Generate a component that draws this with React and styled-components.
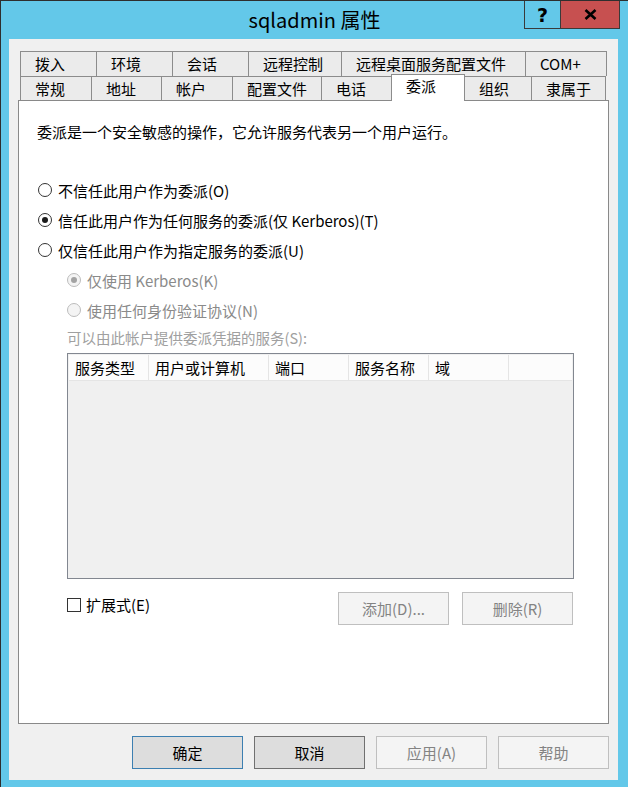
import React from "react";
import styled, { createGlobalStyle } from "styled-components";

const GlobalStyle = createGlobalStyle`
  html, body { margin: 0; padding: 0; background: #63c8e9; }
  body { font-family: "Noto Sans CJK SC", "Noto Sans", sans-serif; color: #000; }
  * { box-sizing: border-box; }
`;

const Window = styled.div`
  width: 628px;
  height: 787px;
  background: #63c8e9;
  border-top: 1px solid #2e2e2e;
  border-left: 1px solid #2e2e2e;
  display: flex;
  flex-direction: column;
  overflow: hidden;
`;

const TitleBar = styled.div`
  height: 38px;
  display: grid;
  grid-template-columns: 1fr auto 1fr;
  align-items: start;
`;

const Title = styled.div`
  font-size: 20px;
  line-height: 38px;
  white-space: nowrap;
`;

const Caption = styled.div`
  justify-self: end;
  display: flex;
  margin-right: 8px;
`;

const CaptionButton = styled.div`
  height: 28px;
  width: ${(p) => (p.$close ? "60px" : "36px")};
  background: ${(p) => (p.$close ? "#c75050" : "transparent")};
  border-left: 1px solid #3a3a3a;
  border-bottom: 1px solid #3a3a3a;
  border-right: ${(p) => (p.$close ? "1px solid #3a3a3a" : "none")};
  display: flex;
  align-items: center;
  justify-content: center;
  font-family: "DejaVu Sans", sans-serif;
  font-weight: bold;
  font-size: 19px;
  color: #000;
`;

const Client = styled.div`
  flex: 1;
  margin: 0 10px 7px 8px;
  background: #f0f0f0;
  padding: 12px 9px 0 9px;
  display: flex;
  flex-direction: column;
`;

const TabRow = styled.div`
  display: flex;
  align-items: flex-end;
  height: ${(p) => p.$h}px;
  padding-left: 2px;
`;

const Tab = styled.div`
  height: ${(p) => (p.$active ? 27 : p.$h)}px;
  flex: 0 0 auto;
  background: ${(p) => (p.$active ? "#fff" : "#ebebeb")};
  border-top: 1px solid #8c8c8c;
  border-left: 1px solid #8c8c8c;
  border-right: ${(p) => (p.$last || p.$active ? "1px solid #8c8c8c" : "none")};
  margin-right: ${(p) => (p.$active ? "-1px" : "0")};
  margin-bottom: ${(p) => (p.$active ? "-1px" : "0")};
  position: relative;
  z-index: ${(p) => (p.$active ? 2 : 1)};
  font-size: 15px;
  line-height: ${(p) => (p.$active ? 22 : p.$h - 1)}px;
  padding-left: 14px;
  white-space: nowrap;
`;

const Panel = styled.div`
  height: 624px;
  background: #fff;
  border: 1px solid #898989;
  padding: 21px 0 0 19px;
  display: flex;
  flex-direction: column;
`;

const Description = styled.div`
  font-size: 15px;
  line-height: 20px;
  margin-left: -1px;
  margin-bottom: 33px;
`;

const RadioRow = styled.div`
  height: 30px;
  display: flex;
  align-items: center;
  gap: 6px;
  padding-left: ${(p) => (p.$sub ? 29 : 0)}px;
  font-size: 15px;
  color: ${(p) => (p.$disabled ? "#8a8a8a" : "#000")};
`;

const RadioCircle = styled.span`
  width: 14px;
  height: 14px;
  border-radius: 50%;
  border: 1px solid ${(p) => (p.$disabled ? "#bcbcbc" : "#333")};
  background: ${(p) => (p.$disabled ? "#f4f4f4" : "#fff")};
  display: flex;
  align-items: center;
  justify-content: center;
  flex: 0 0 auto;
`;

const RadioDot = styled.span`
  width: 6px;
  height: 6px;
  border-radius: 50%;
  background: ${(p) => (p.$disabled ? "#a3a3a3" : "#1a1a1a")};
`;

const ListLabel = styled.div`
  margin: 3px 0 0 29px;
  font-size: 14.5px;
  line-height: 20px;
  color: #a0a0a0;
`;

const ListView = styled.div`
  margin: 5px 0 0 29px;
  width: 507px;
  height: 226px;
  border: 1px solid #828790;
  background: #f0f0f0;
  padding: 1px;
`;

const Header = styled.div`
  display: flex;
  height: 26px;
  background: #fcfcfc;
  border-bottom: 1px solid #e5e5e5;
`;

const HeaderCell = styled.div`
  width: ${(p) => p.$w}px;
  flex: 0 0 auto;
  border-right: 1px solid #e5e5e5;
  padding-left: 6px;
  font-size: 15px;
  line-height: 25px;
  white-space: nowrap;
`;

const ActionRow = styled.div`
  margin: 13px 0 0 29px;
  width: 506px;
  display: flex;
  justify-content: space-between;
  align-items: flex-start;
`;

const CheckLabel = styled.label`
  display: flex;
  align-items: center;
  gap: 5px;
  margin-top: 3px;
  font-size: 15px;
  line-height: 20px;
`;

const CheckBox = styled.span`
  width: 14px;
  height: 14px;
  border: 1px solid #333;
  background: #fff;
`;

const ButtonGroup = styled.div`
  display: flex;
  gap: ${(p) => p.$gap}px;
`;

const Button = styled.div`
  width: 111px;
  height: 33px;
  display: flex;
  align-items: center;
  justify-content: center;
  font-size: 15px;
  border: 1px solid
    ${(p) =>
      p.$variant === "default" ? "#3c7fb1" : p.$variant === "disabled" ? "#bfbfbf" : "#707070"};
  background: ${(p) => (p.$variant === "disabled" ? "#f4f4f4" : "#dddddd")};
  color: ${(p) => (p.$variant === "disabled" ? "#838383" : "#000")};
`;

const Footer = styled.div`
  margin-top: 12px;
  display: flex;
  justify-content: flex-end;
`;

const row1 = [
  ["拨入", 76],
  ["环境", 76],
  ["会话", 76],
  ["远程控制", 93],
  ["远程桌面服务配置文件", 184],
  ["COM+", 82],
];
const row2 = [
  ["常规", 71],
  ["地址", 70],
  ["帐户", 71],
  ["配置文件", 89],
  ["电话", 70],
  ["委派", 74],
  ["组织", 67],
  ["隶属于", 75],
];

const columns = [
  ["服务类型", 80],
  ["用户或计算机", 120],
  ["端口", 80],
  ["服务名称", 80],
  ["域", 80],
];

const radios = [
  { label: "不信任此用户作为委派(O)" },
  { label: "信任此用户作为任何服务的委派(仅 Kerberos)(T)", checked: true },
  { label: "仅信任此用户作为指定服务的委派(U)" },
  { label: "仅使用 Kerberos(K)", checked: true, sub: true, disabled: true },
  { label: "使用任何身份验证协议(N)", sub: true, disabled: true },
];

export default function App() {
  return (
    <>
      <GlobalStyle />
      <Window>
        <TitleBar>
          <div />
          <Title>sqladmin 属性</Title>
          <Caption>
            <CaptionButton>?</CaptionButton>
            <CaptionButton $close>
              <svg width="13" height="11" viewBox="0 0 13 11">
                <path d="M1.5 1 L11.5 10 M11.5 1 L1.5 10" stroke="#000" strokeWidth="2.6" />
              </svg>
            </CaptionButton>
          </Caption>
        </TitleBar>
        <Client>
          <TabRow $h={25}>
            {row1.map(([t, w], i) => (
              <Tab key={t} $h={25} $last={i === row1.length - 1} style={{ width: w }}>
                {t}
              </Tab>
            ))}
          </TabRow>
          <TabRow $h={24}>
            {row2.map(([t, w], i) => (
              <Tab
                key={t}
                $h={24}
                $active={t === "委派"}
                $last={i === row2.length - 1}
                style={{ width: w }}
              >
                {t}
              </Tab>
            ))}
          </TabRow>
          <Panel>
            <Description>委派是一个安全敏感的操作，它允许服务代表另一个用户运行。</Description>
            {radios.map((r) => (
              <RadioRow key={r.label} $sub={r.sub} $disabled={r.disabled}>
                <RadioCircle $disabled={r.disabled}>
                  {r.checked && <RadioDot $disabled={r.disabled} />}
                </RadioCircle>
                {r.label}
              </RadioRow>
            ))}
            <ListLabel>可以由此帐户提供委派凭据的服务(S):</ListLabel>
            <ListView>
              <Header>
                {columns.map(([c, w]) => (
                  <HeaderCell key={c} $w={w}>
                    {c}
                  </HeaderCell>
                ))}
              </Header>
            </ListView>
            <ActionRow>
              <CheckLabel>
                <CheckBox />
                扩展式(E)
              </CheckLabel>
              <ButtonGroup $gap={13}>
                <Button $variant="disabled">添加(D)...</Button>
                <Button $variant="disabled">删除(R)</Button>
              </ButtonGroup>
            </ActionRow>
          </Panel>
          <Footer>
            <ButtonGroup $gap={11}>
              <Button $variant="default">确定</Button>
              <Button>取消</Button>
              <Button $variant="disabled">应用(A)</Button>
              <Button $variant="disabled">帮助</Button>
            </ButtonGroup>
          </Footer>
        </Client>
      </Window>
    </>
  );
}
